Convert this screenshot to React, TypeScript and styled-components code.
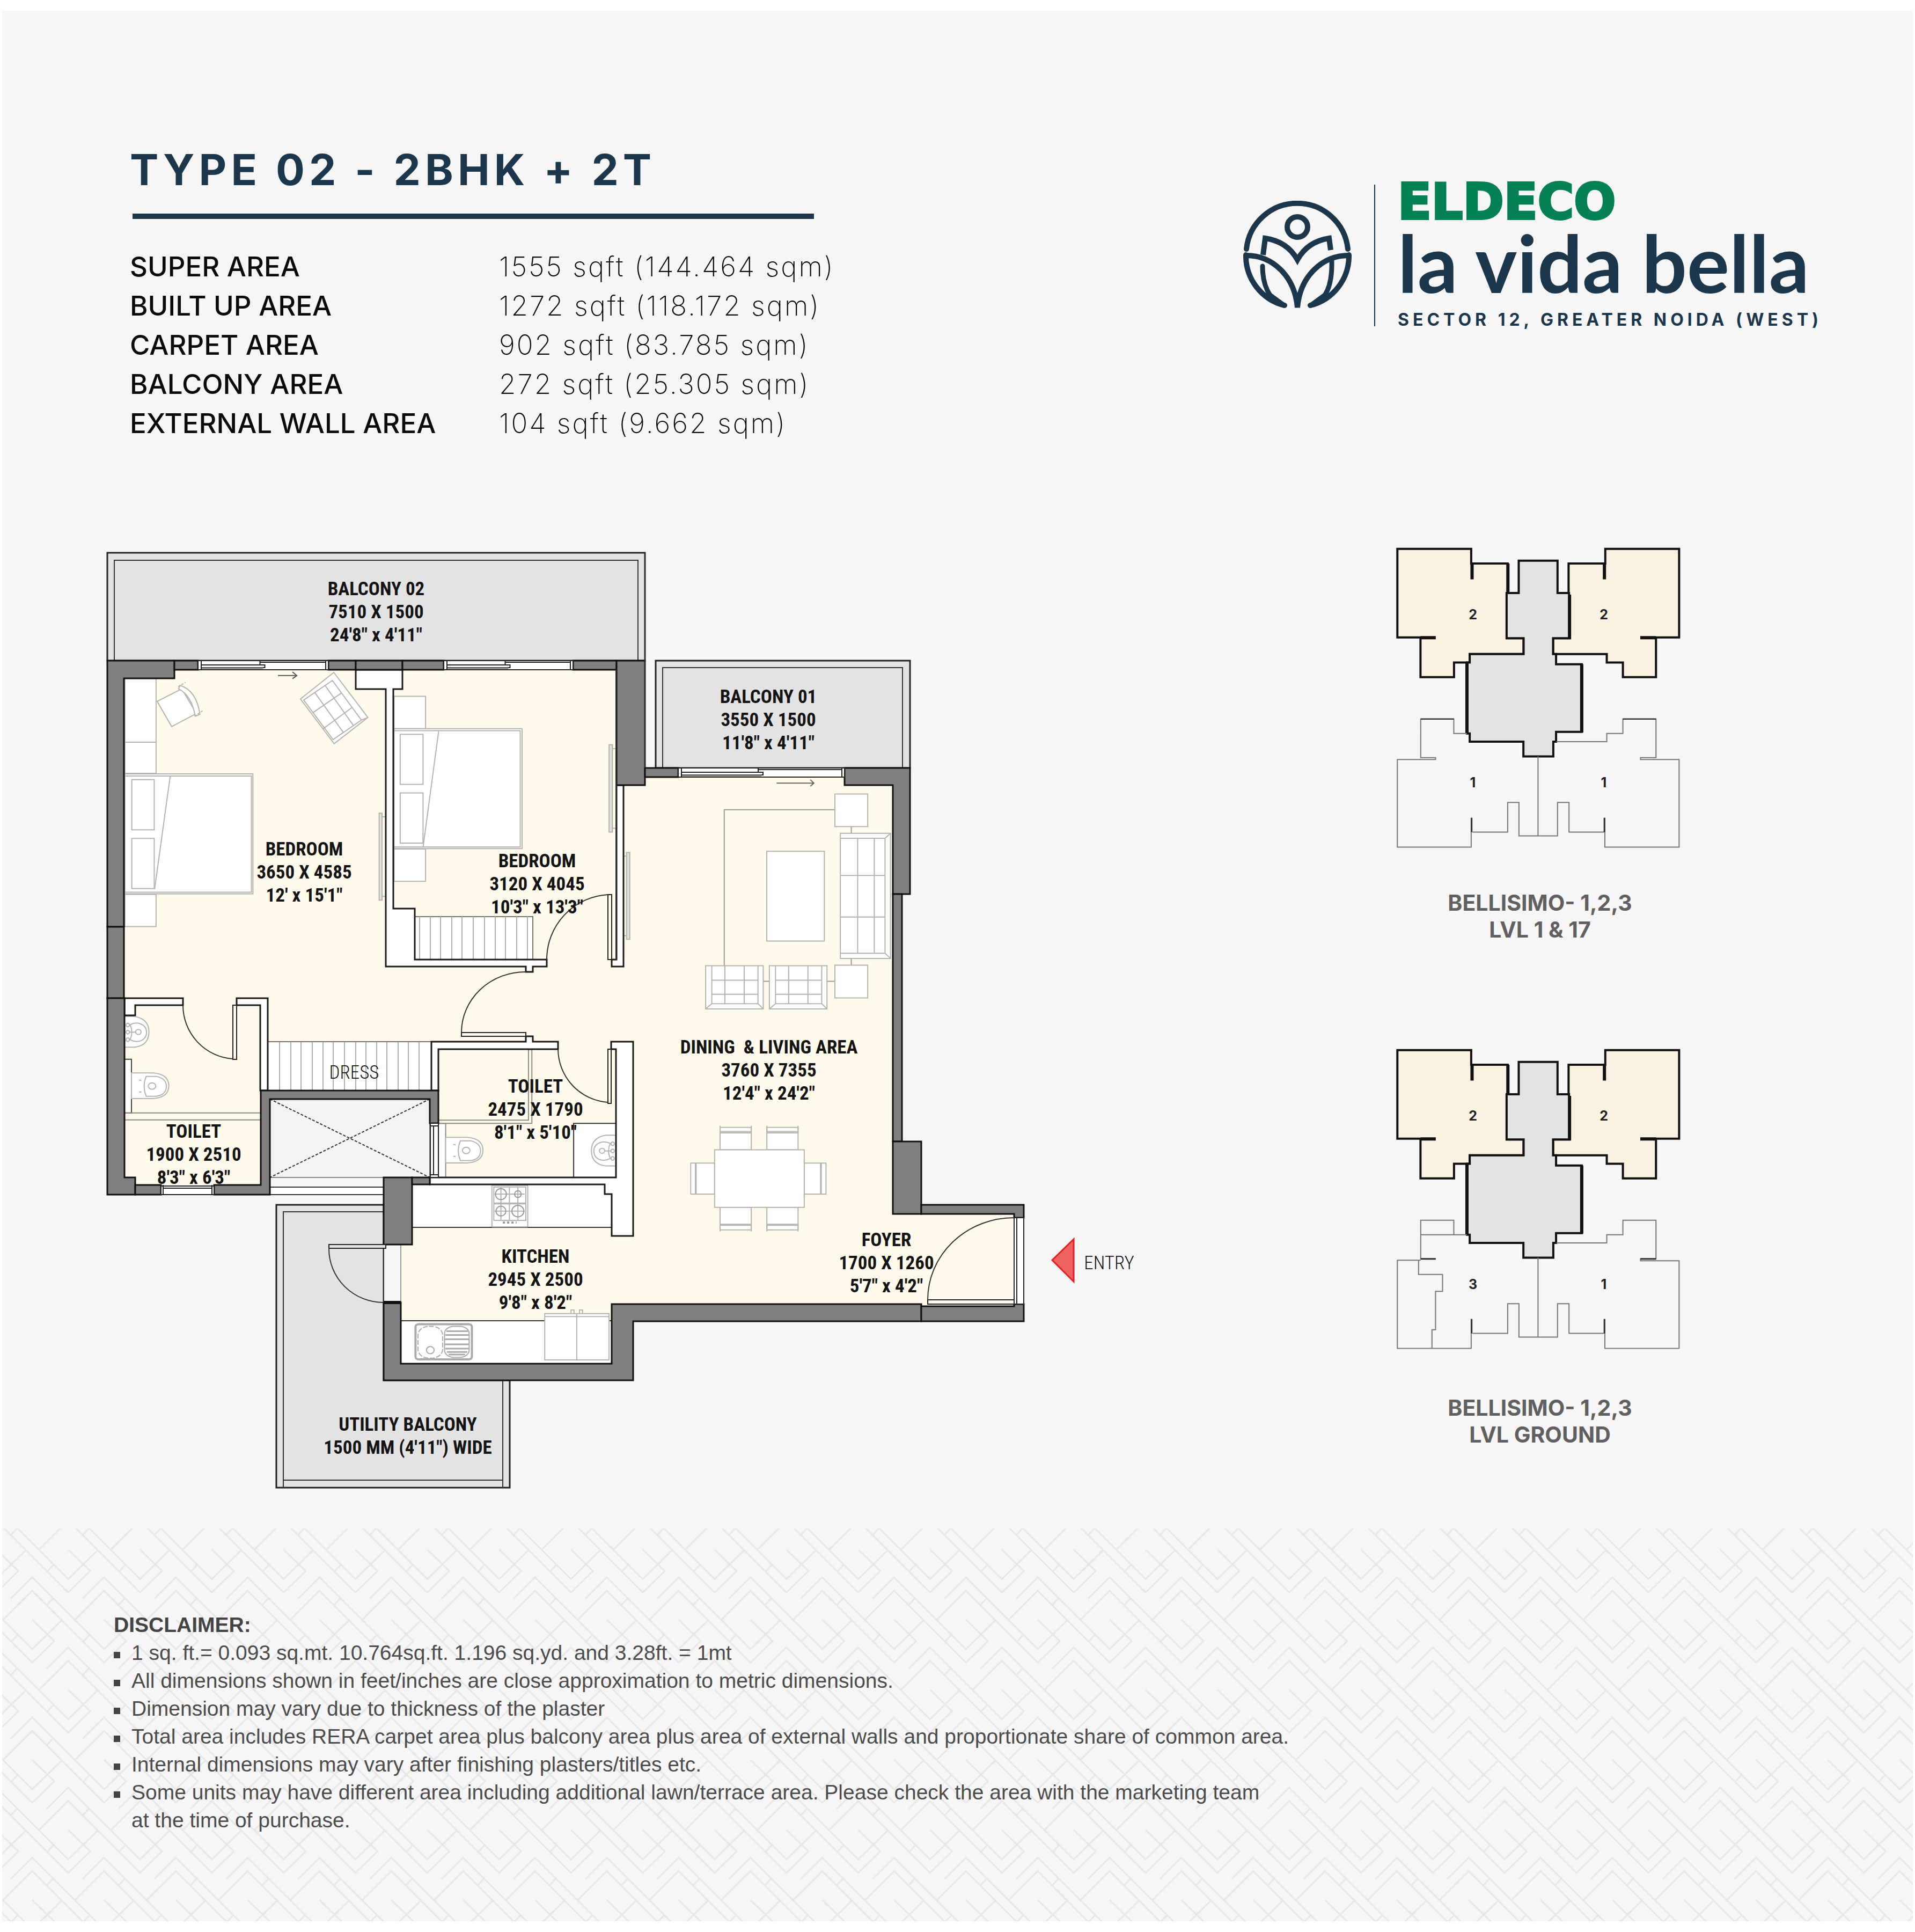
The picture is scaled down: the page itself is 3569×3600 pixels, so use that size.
import React from 'react';
import styled, { createGlobalStyle } from 'styled-components';

const navy = '#1c374b';
const sans = "Inter, 'Open Sans', sans-serif";
const planFont = "'Roboto Condensed', 'Liberation Sans Narrow', Lato, sans-serif";

const Global = createGlobalStyle`
  * { box-sizing: border-box; }
  body { margin: 0; background: #fff; font-family: ${sans}; color: #111; }
  h1, h2, p, ul, figure { margin: 0; padding: 0; }
`;

const Sheet = styled.main`
  margin: 20px 4px;
  background: #f6f6f6;
  display: flex;
  flex-direction: column;
`;

const Header = styled.header`
  display: flex;
  justify-content: space-between;
  align-items: flex-start;
  padding: 256px 0 0 238px;
`;

const Summary = styled.section`
  display: flex;
  flex-direction: column;
`;

const Title = styled.h1`
  font-size: 80px;
  line-height: 80px;
  font-weight: 700;
  letter-spacing: 8px;
  color: ${navy};
`;

const Rule = styled.div`
  width: 1270px;
  height: 10px;
  margin: 42px 0 52px 5px;
  background: ${navy};
`;

const AreaTable = styled.table`
  border-collapse: collapse;
  font-size: 51px;
  line-height: 73px;
  color: #0a0a0a;
  text-align: left;

  th {
    width: 688px;
    padding: 0;
    font-weight: 500;
  }
  td {
    padding: 0;
    font-weight: 200;
    letter-spacing: 3px;
  }
`;

const Logo = styled.div`
  flex: 0 0 1248px;
  display: flex;
  align-items: flex-start;
  gap: 42px;
  margin-top: 68px;
  color: ${navy};
`;

const Mark = styled.svg`
  flex: none;
  width: 202px;
  height: 204px;
  margin-top: 30px;
  fill: none;
  stroke: ${navy};
  stroke-width: 10;
  stroke-linecap: round;
`;

const Divider = styled.div`
  width: 2px;
  height: 264px;
  background: ${navy};
`;

const Wordmark = styled.div`
  display: flex;
  flex-direction: column;
  white-space: nowrap;
`;

const Company = styled.span`
  font-family: 'DejaVu Sans', sans-serif;
  font-size: 92px;
  line-height: 66px;
  font-weight: 700;
  -webkit-text-stroke: 4px #038153;
  color: #038153;
`;

const Project = styled.span`
  font-family: Lato, sans-serif;
  font-size: 148px;
  line-height: 158px;
  font-weight: 700;
`;

const Address = styled.span`
  margin-top: 12px;
  font-size: 32px;
  line-height: 32px;
  font-weight: 700;
  letter-spacing: 7px;
`;

const Plans = styled.section`
  display: flex;
  justify-content: space-between;
  align-items: flex-start;
  padding: 185px 385px 48px 176px;
`;

const FloorPlan = styled.svg`
  flex: 0 1 1960px;
  min-width: 0;
`;

const KeyColumn = styled.div`
  flex: 0 0 620px;
  display: flex;
  flex-direction: column;
  gap: 194px;
`;

const KeyFigure = styled.figure`
  display: flex;
  flex-direction: column;
  gap: 47px;

  figcaption {
    font-size: 41px;
    line-height: 50px;
    font-weight: 700;
    color: #606060;
    text-align: center;
  }
`;

const Footer = styled.footer`
  position: relative;
  padding: 154px 208px 162px;
  font-family: 'Liberation Sans', Arial, sans-serif;
  font-size: 39px;
  line-height: 52px;
  color: #4c4c4c;
`;

const Backdrop = styled.svg`
  position: absolute;
  inset: 0;
  width: 100%;
  height: 100%;
`;

const Notes = styled.div`
  position: relative;

  h2 {
    font-size: 39px;
    line-height: 52px;
    font-weight: 700;
    color: #444;
  }
  ul { list-style: none; }
  li {
    display: flex;
    gap: 21px;
  }
  li::before {
    content: '';
    flex: none;
    width: 12px;
    height: 12px;
    margin-top: 24px;
    background: #444;
  }
`;

/* drawing styles */
const Solid = styled.path`
  fill: #808080;
  stroke: #111;
  stroke-width: 3;
`;
const Partition = styled.path`
  fill: #fff;
  stroke: #1a1a1a;
  stroke-width: 3;
`;
const Terrace = styled.path`
  fill: #e3e3e3;
  stroke: #222;
  stroke-width: 3;
`;
const Line = styled.path<{ $dash?: string }>`
  fill: none;
  stroke: #333;
  stroke-width: 2;
  stroke-dasharray: ${(p) => p.$dash ?? 'none'};
`;
const Furniture = styled.g`
  fill: #fff;
  stroke: #b4b4ae;
  stroke-width: 2;
  & * { vector-effect: non-scaling-stroke; }
`;
const Frame = styled.g`
  fill: #fff;
  stroke: #222;
  stroke-width: 2;
`;
const RoomText = styled.text<{ $light?: boolean }>`
  font-family: ${planFont};
  font-size: 35px;
  font-weight: ${(p) => (p.$light ? 300 : 700)};
  fill: #141414;
  text-anchor: middle;
  white-space: pre;
`;

type RoomLabel = { x: number; y: number; lines: string[] };

const rooms: RoomLabel[] = [
  { x: 701, y: 1109, lines: ['BALCONY 02', '7510 X 1500', '24\'8" x 4\'11"'] },
  { x: 1432, y: 1310, lines: ['BALCONY 01', '3550 X 1500', '11\'8" x 4\'11"'] },
  { x: 567, y: 1594, lines: ['BEDROOM', '3650 X 4585', '12\' x 15\'1"'] },
  { x: 1001, y: 1616, lines: ['BEDROOM', '3120 X 4045', '10\'3" x 13\'3"'] },
  { x: 361, y: 2120, lines: ['TOILET', '1900 X 2510', '8\'3" x 6\'3"'] },
  { x: 998, y: 2036, lines: ['TOILET', '2475 X 1790', '8\'1" x 5\'10"'] },
  { x: 1433, y: 1963, lines: ['DINING  & LIVING AREA', '3760 X 7355', '12\'4" x 24\'2"'] },
  { x: 998, y: 2353, lines: ['KITCHEN', '2945 X 2500', '9\'8" x 8\'2"'] },
  { x: 1652, y: 2322, lines: ['FOYER', '1700 X 1260', '5\'7" x 4\'2"'] },
  { x: 760, y: 2666, lines: ['UTILITY BALCONY', '1500 MM (4\'11") WIDE'] },
];

const solidWalls = [
  'M200 1231H325V1264H231V1727H200Z',
  'M200 1727H231V1860H200Z',
  'M200 1860H232V2194H252V2226H200Z',
  'M252 2208H300V2226H252Z',
  'M399 2208H486V2032H817V2093H801V2048H503V2226H399Z',
  'M325 1231H369V1248H325Z',
  'M612 1231H663V1248H612Z',
  'M663 1231H750V1248H663Z',
  'M750 1231H827V1248H750Z',
  'M1068 1231H1149V1248H1068Z',
  'M1149 1231H1202V1463H1149Z',
  'M1202 1431H1264V1448H1202Z',
  'M1574 1431H1696V1666H1664V1463H1574Z',
  'M1664 1666H1681V2127H1664Z',
  'M1664 2127H1717V2262H1664Z',
  'M1717 2245H1908V2269H1890V2262H1717Z',
  'M1140 2430H1717V2462H1180V2572H715V2427H747V2541H1140Z',
  'M1717 2434H1890V2430H1908V2462H1717Z',
  'M715 2194H768V2319H715Z',
  'M768 2194H801V2207H768Z',
];

const partitions = [
  'M663 1248H750V1284H733V1693H773V1788H1019V1801H993V1811H980V1801H719V1284H663Z',
  'M1149 1463H1162V1801H1140V1788H1149Z',
  'M232 1860H341V1873H252V1892H232Z',
  'M441 1860H499V2032H485V1873H441Z',
  'M804 1941H980V1931H993V1941H1040V1955H817V2032H804Z',
  'M1139 1941H1180V2303H1140V2225H1127V2207H801V2194H1148V1955H1139Z',
];

const stripes = (xs: number[], top: number, bottom: number) =>
  xs.map((x) => `M${x} ${top}V${bottom}`).join('');

function SlidingWindow({ x, y, width }: { x: number; y: number; width: number }) {
  const mid = x + width / 2;
  return (
    <Frame>
      <rect x={x} y={y} width={width} height={17} />
      <path d={`M${x + 6} ${y}v17M${x + width - 5} ${y}v17M${mid - 6} ${y + 3}H${x + width - 5}M${x + 6} ${y + 8}H${mid + 3}v5H${x + 6}M${mid - 6} ${y}v8`} />
      <path d={`M${x + 7} ${y + 14}H${mid}`} stroke="#777" strokeWidth={3} />
    </Frame>
  );
}

function Seat({ x }: { x: number }) {
  return (
    <>
      <rect x={x} y={1278} width={263} height={166} />
      <path
        fill="none"
        d={`M${x + 28} 1278V1424H${x + 239}V1278M${x + 88} 1278V1424M${x + 176} 1278V1424M${x + 28} 1334H${x + 239}M${x + 28} 1388H${x + 239}M${x} 1444L${x + 28} 1424M${x + 263} 1444L${x + 239} 1424`}
      />
    </>
  );
}

function Closet() {
  return (
    <g>
      <path d="M102 778H165Q211 785 211 850Q211 915 165 921H102Z" />
      <path d="M145 797H175Q204 810 204 852Q204 900 175 908H145Q133 852 145 797Z" />
      <ellipse cx="162" cy="851" rx="11" ry="18" />
      <path d="M124 818h7M124 884h7" />
    </g>
  );
}

function Basin() {
  return (
    <g>
      <path d="M82 462H110Q153 475 153 548Q153 625 110 634H82" />
      <path d="M98 508Q112 494 126 502Q146 515 146 550Q146 588 126 600Q112 607 98 592Q108 550 98 508Z" />
      <path d="M94 550h24" />
      <ellipse cx="91" cy="510" rx="5" ry="10" />
      <ellipse cx="91" cy="550" rx="5" ry="10" />
      <ellipse cx="91" cy="592" rx="5" ry="10" />
      <ellipse cx="122" cy="549" rx="8" ry="14" />
    </g>
  );
}

function BedroomFurniture() {
  return (
    <Furniture transform="translate(180 1000) scale(.676 .4847)">
      <rect x="78" y="545" width="86" height="245" />
      <rect x="78" y="790" width="86" height="120" />
      <rect x="78" y="1375" width="86" height="124" />
      <rect x="78" y="912" width="353" height="461" />
      <rect x="78" y="920" width="349" height="447" />
      <rect x="97" y="934" width="62" height="193" />
      <rect x="97" y="1160" width="62" height="193" />
      <path d="M203 920L160 1355" />
      <path d="M167 633L235 585L275 680L207 730Z" />
      <path d="M230 572Q275 590 285 683L272 690Q262 610 226 585Z" />
      <path d="M225 577L245 560M270 690L294 668" strokeDasharray="4 3" />
      <path d="M654 522L748 695L655 796L562 624Z" />
      <path fill="none" d="M571 628L650 553L730 705L652 780ZM602 600L680 752M630 572L708 726M595 678L676 600M625 738L706 655M748 695L730 705" />
      <rect x="820" y="614" width="87" height="124" />
      <rect x="820" y="1201" width="87" height="124" />
      <rect x="820" y="738" width="353" height="461" />
      <rect x="820" y="746" width="348" height="447" />
      <rect x="837" y="760" width="63" height="192" />
      <rect x="837" y="985" width="63" height="193" />
      <path d="M943 748L900 1195" />
      <g fill="#e0e2dc">
        <rect x="779" y="1063" width="8" height="334" />
        <path d="M787 1077h10M787 1383h10" />
        <rect x="1413" y="800" width="9" height="336" />
        <path d="M1422 815h10M1422 1121h10" />
        <rect x="1461" y="1214" width="9" height="334" />
        <path d="M1454 1228h8M1454 1534h8" />
      </g>
      <path d="M500 534H552M540 520L552 534L540 546" fill="none" stroke="#555" />
    </Furniture>
  );
}

function LivingFurniture() {
  return (
    <Furniture transform="translate(1100 1180) scale(.4082 .4847)">
      <path fill="none" stroke="#9c9c90" d="M1117 678H612V1278M1192 743V769M1192 1250V1276M790 1338H818M1081 1338H1117" />
      <rect x="1117" y="618" width="150" height="125" />
      <rect x="1117" y="1276" width="150" height="126" />
      <rect x="806" y="838" width="263" height="345" />
      <rect x="1142" y="769" width="229" height="481" />
      <path fill="none" d="M1142 788H1346V1230H1142M1221 788V1230M1297 788V1230M1142 931H1346M1142 1091H1346M1346 788L1371 769M1346 1230L1371 1250" />
      <Seat x={527} />
      <Seat x={818} />
      <path fill="none" stroke="#666" d="M851 576H1021M1005 563L1021 576L1005 588" />
    </Furniture>
  );
}

function DiningFurniture() {
  return (
    <Furniture transform="translate(1100 1840) scale(.676 .4974)">
      {[358, 487].map((x) => (
        <g key={x}>
          <rect x={x} y="524" width="86" height="16" />
          <rect x={x} y="545" width="86" height="63" />
          <rect x={x} y="824" width="86" height="63" />
          <rect x={x} y="891" width="86" height="17" />
          <path d={`M${x} 518v27M${x + 86} 518v27M${x} 887v27M${x + 86} 887v27`} />
        </g>
      ))}
      <rect x="292" y="658" width="51" height="116" />
      <rect x="277" y="658" width="13" height="116" />
      <rect x="590" y="658" width="45" height="116" />
      <rect x="637" y="658" width="13" height="116" />
      <rect x="343" y="608" width="247" height="216" />
    </Furniture>
  );
}

function BathFittings() {
  return (
    <Furniture transform="translate(180 1740) scale(.6378 .3333)">
      <rect x="81" y="701" width="21" height="300" stroke="#444" />
      <Closet />
      <Basin />
      <rect x="999" y="1060" width="21" height="302" stroke="#888" />
      <g transform="translate(918 360)">
        <Closet />
      </g>
      <rect x="1394" y="1060" width="124" height="302" stroke="#333" />
      <g transform="translate(1599 664) scale(-1 1)">
        <Basin />
      </g>
      <path fill="none" d="M82 1001H478M82 1040H478M1001 1042H1262V645M1001 1060H1272V645" stroke="#8f8d80" />
    </Furniture>
  );
}

function KitchenFittings() {
  return (
    <Furniture transform="translate(480 2180) scale(.5102 .3954)">
      <rect x="856" y="73" width="131" height="195" rx="4" />
      <rect x="863" y="80" width="117" height="76" />
      <rect x="863" y="160" width="117" height="78" />
      <path d="M920 80V238M866 114H976M866 194H976M889 82V236M951 82V236" />
      <g fill="none" stroke="#999">
        <ellipse cx="889" cy="114" rx="20" ry="26" />
        <ellipse cx="951" cy="114" rx="12" ry="16" />
        <ellipse cx="889" cy="194" rx="18" ry="23" />
        <ellipse cx="951" cy="194" rx="22" ry="27" />
        <path d="M896 248h50" strokeWidth="4" strokeDasharray="4 4" />
      </g>
      <g stroke="#aaa">
        <rect x="577" y="727" width="206" height="166" rx="12" strokeWidth="4" />
        <rect x="586" y="737" width="90" height="150" rx="40" strokeDasharray="9 3" />
        <rect x="683" y="737" width="90" height="146" rx="34" />
        <path strokeWidth="3" d="M690 760H768M686 778H772M684 798H773M684 822H773M686 842H772M692 858H766M698 870H758" />
        <ellipse cx="631" cy="849" rx="14" ry="17" />
      </g>
      <path d="M1145 677V660H1156V677M1176 677V660H1187V677" />
      <rect x="1049" y="677" width="235" height="218" />
      <path d="M1049 691H1284M1166 677V895" />
    </Furniture>
  );
}

function UnitPlan() {
  return (
    <FloorPlan viewBox="180 1010 1960 1790" role="img" aria-label="Type 02 floor plan">
      <path fill="#fffaec" d="M200 1231H1202V1431H1664V2262H1890V2434H1140V2541H747V2194H804V2032H486V2208H232Z" />

      <Terrace d="M200 1030H1202V1231H200Z" />
      <Line d="M213 1231V1044H1189V1231" />
      <Terrace d="M1222 1431V1231H1696V1431Z" />
      <Line d="M1235 1431V1244H1682V1431" />
      <Terrace d="M515 2245H715V2572H950V2772H515Z" />
      <Line d="M715 2258H528V2772M528 2758H937M937 2572V2772" />

      <rect x="503" y="2048" width="298" height="146" fill="#f3f3f3" stroke="#888" strokeWidth="2" />
      <Line $dash="5 3" stroke="#777" d="M503 2048L801 2194M801 2048L503 2194" />
      <rect x="503" y="2212" width="212" height="14" fill="#fff" />
      <Line d="M503 2212H715M503 2226H715" />

      <rect x="499" y="1941" width="305" height="90" fill="#fff" />
      <rect x="773" y="1708" width="220" height="80" fill="#fff" />
      <g stroke="#b0b0a8" strokeWidth="2" fill="none">
        <path d={stripes([521, 542, 561, 582, 602, 621, 642, 663, 682, 702, 721, 742, 761, 781], 1941, 2031)} />
        <path d="M499 1941H804M773 1708H993V1788" stroke="#77756c" />
        <path d={stripes([782, 802, 821, 842, 861, 882, 903, 923, 942, 963, 983], 1708, 1788)} />
      </g>

      <rect x="768" y="2207" width="372" height="80" fill="#fff" />
      <Line d="M768 2287H1140" />
      <rect x="747" y="2461" width="393" height="80" fill="#fff" />
      <Line d="M747 2461H1140" />
      <rect x="715" y="2319" width="32" height="108" fill="#f6f6f6" />
      <Line d="M715 2319V2427" />
      <path d="M747 2319V2427" stroke="#999" strokeWidth="2" />

      <BedroomFurniture />
      <LivingFurniture />
      <DiningFurniture />
      <BathFittings />
      <KitchenFittings />

      {partitions.map((d) => (
        <Partition key={d} d={d} />
      ))}
      {solidWalls.map((d) => (
        <Solid key={d} d={d} />
      ))}
      <Line d="M1148 1248V1788M1202 1030V1431" />
      <path d="M715 2427H747" stroke="#111" strokeWidth="6" />

      <SlidingWindow x={369} y={1231} width={243} />
      <SlidingWindow x={827} y={1231} width={241} />
      <SlidingWindow x={1264} y={1431} width={310} />
      <Frame>
        <path d="M300 2210H399V2226H300ZM304 2214H395M304 2208V2226M395 2208V2226" />
        <path d="M802 2093H817V2194H802ZM808 2097V2190M802 2098H817M802 2189H817" />
        <path d="M1890 2269H1908V2430H1890ZM1895 2269V2430" />
        <g fill="#fffaec">
          <path d="M434 1873H441V1974H434Z" />
          <path d="M860 1924H980V1931H860Z" />
          <path d="M1133 1955H1139V2056H1133Z" />
          <path d="M1133 1667H1140V1788H1133Z" />
          <path d="M1729 2422H1890V2430H1729Z" />
        </g>
        <path fill="#e3e3e3" d="M613 2319H719V2326H613Z" />
      </Frame>
      <Line d="M341 1873A100 100 0 0 0 434 1973" />
      <Line d="M860 1924A119 113 0 0 1 980 1811" />
      <Line d="M1040 1955A100 100 0 0 0 1133 2054" />
      <Line d="M1019 1788A121 121 0 0 1 1133 1667" />
      <Line d="M1729 2422A161 153 0 0 1 1890 2269" />
      <Line d="M613 2326A102 100 0 0 0 715 2427" />

      <path d="M1961 2348L2001 2309V2388Z" fill="#ee6260" stroke="#df2126" strokeWidth="3" />

      {rooms.map((room) =>
        room.lines.map((line, i) => (
          <RoomText key={`${room.x}-${line}`} x={room.x} y={room.y + i * 43}>
            {line}
          </RoomText>
        )),
      )}
      <RoomText $light x={660} y={2010}>DRESS</RoomText>
      <RoomText $light x={2067} y={2365}>ENTRY</RoomText>
    </FloorPlan>
  );
}

const KeyDrawing = styled.g`
  fill: none;
  stroke: #111;
  stroke-width: 4;
  & * { vector-effect: non-scaling-stroke; }
`;
const KeyNumber = styled.text`
  font-family: ${sans};
  font-size: 25px;
  font-weight: 700;
  fill: #222;
  text-anchor: middle;
`;

const flatLeft =
  'M112 84H460V137H632V247H627V410H707V468H453V499H379V552H221V407H112Z';
const flatRight =
  'M1440 84H1092V137H919V255H926V410H846V468H1099V499H1175V552H1331V407H1440Z';
const core =
  'M684 127H867V245H921V410H846V468H860V505H981V752H860V788H847V842H706V788H453V758H440V499H453V468H707V410H627V245H684Z';

type KeyPlanProps = { title: string; level: string; origin: number; numbers: string[]; ground?: boolean };

function KeyPlan({ title, level, origin, numbers, ground }: KeyPlanProps) {
  return (
    <KeyFigure>
      <svg viewBox={`0 ${origin} 620 600`} role="img" aria-label={`${title} ${level}`}>
        <KeyDrawing transform={`translate(0 ${ground ? -6 : 0}) scale(.3954 .5102)`}>
          <path fill="#f9f2e3" d={flatLeft} />
          <path fill="#f9f2e3" d={flatRight} />
          <path fill="#e3e3e3" d={core} />
          <path strokeWidth="6" d="M464 137V195M1088 137V195M221 408H293M1331 408H1257M440 499V758M981 505V754M633 137V247" />
          <g stroke="#777" strokeWidth="2">
            <path d="M862 788H1099V758H1175V705H1331V846H1258V853H1440V1173H1090V1066M1086 1118H921V1010H867V1132H685V1010H632V1118H466M775 842V1132" />
            {ground ? (
              <>
                <path d="M440 758H222V705H378V758M222 758V846H293M222 851H112V1173H460V1066M212 851V903H325V965H292V1105H275V1173" />
                <path d="M222 846H293M1258 846H1331" stroke="#333" strokeWidth="3" />
              </>
            ) : (
              <>
                <path d="M440 758H378V705H222V846H292V853H112V1173H460V1066" />
                <path d="M222 705H378M1175 705H1331" stroke="#222" />
              </>
            )}
            <path d="M462 1066V1118M1088 1066V1118" stroke="#333" strokeWidth="3" />
          </g>
        </KeyDrawing>
        {numbers.map((n, i) => (
          <KeyNumber key={i} x={i % 2 ? 429 : 185} y={i < 2 ? (ground ? 168 : 174) : (ground ? 482 : 487)}>
            {n}
          </KeyNumber>
        ))}
      </svg>
      <figcaption>
        {title}
        <br />
        {level}
      </figcaption>
    </KeyFigure>
  );
}

const TILE_W = 133.86;
const TILE_H = 261.2;
const weave =
  'M-40 15L0 -25L134 109L188 56M-54 54L0 0L134 134L175 94L134 54M27 27L39 14M95 95L107 82';

function Weave() {
  const cells: [number, number][] = [];
  for (let i = -2; i <= 1; i += 1) {
    for (let j = -1; j <= 1; j += 1) {
      cells.push([i * TILE_W, j * TILE_H], [(i + 0.5) * TILE_W, (j + 0.5) * TILE_H]);
    }
  }
  return (
    <Backdrop aria-hidden="true">
      <defs>
        <pattern id="weave" width={TILE_W} height={TILE_H} patternUnits="userSpaceOnUse" patternTransform="translate(56 116)">
          {cells.map(([x, y]) => (
            <path key={`${x},${y}`} d={weave} transform={`translate(${x} ${y})`} fill="none" stroke="#e6e6e6" strokeWidth="3" />
          ))}
        </pattern>
      </defs>
      <rect width="100%" height="100%" fill="url(#weave)" />
    </Backdrop>
  );
}

const areas = [
  ['SUPER AREA', '1555 sqft (144.464 sqm)'],
  ['BUILT UP AREA', '1272 sqft (118.172 sqm)'],
  ['CARPET AREA', '902 sqft (83.785 sqm)'],
  ['BALCONY AREA', '272 sqft (25.305 sqm)'],
  ['EXTERNAL WALL AREA', '104 sqft (9.662 sqm)'],
];

export default function App() {
  return (
    <>
      <Global />
      <Sheet>
        <Header>
          <Summary>
            <Title>TYPE 02 - 2BHK + 2T</Title>
            <Rule />
            <AreaTable>
              <tbody>
                {areas.map(([name, value]) => (
                  <tr key={name}>
                    <th scope="row">{name}</th>
                    <td>{value}</td>
                  </tr>
                ))}
              </tbody>
            </AreaTable>
          </Summary>
          <Logo>
            <Mark viewBox="0 0 202 204" aria-hidden="true">
              <path d="M6 90A95 95 0 0 1 195 90" />
              <circle cx="101" cy="49" r="19" />
              <path strokeLinecap="butt" d="M37 101L41 70Q82 76 101 110Q120 76 160 70L163 92" />
              <path d="M6 102C54 102 96 140 101 199C106 140 148 102 196 102" />
              <path d="M5 101A95 95 0 0 0 77 195M197 101A95 95 0 0 1 125 195" />
              <path strokeWidth="9" d="M36 122Q36 155 50 176L76 195M165 112Q166 155 152 176L126 195" />
            </Mark>
            <Divider />
            <Wordmark>
              <Company>ELDECO</Company>
              <Project>la vida bella</Project>
              <Address>SECTOR 12, GREATER NOIDA (WEST)</Address>
            </Wordmark>
          </Logo>
        </Header>

        <Plans>
          <UnitPlan />
          <KeyColumn>
            <KeyPlan title="BELLISIMO- 1,2,3" level="LVL 1 & 17" origin={30} numbers={['2', '2', '1', '1']} />
            <KeyPlan title="BELLISIMO- 1,2,3" level="LVL GROUND" origin={31} numbers={['2', '2', '3', '1']} ground />
          </KeyColumn>
        </Plans>

        <Footer>
          <Weave />
          <Notes>
            <h2>DISCLAIMER:</h2>
            <ul>
              <li>1 sq. ft.= 0.093 sq.mt. 10.764sq.ft. 1.196 sq.yd. and 3.28ft. = 1mt</li>
              <li>All dimensions shown in feet/inches are close approximation to metric dimensions.</li>
              <li>Dimension may vary due to thickness of the plaster</li>
              <li>Total area includes RERA carpet area plus balcony area plus area of external walls and proportionate share of common area.</li>
              <li>Internal dimensions may vary after finishing plasters/titles etc.</li>
              <li>
                <span>
                  Some units may have different area including additional lawn/terrace area. Please check the area with the marketing team
                  <br />
                  at the time of purchase.
                </span>
              </li>
            </ul>
          </Notes>
        </Footer>
      </Sheet>
    </>
  );
}
